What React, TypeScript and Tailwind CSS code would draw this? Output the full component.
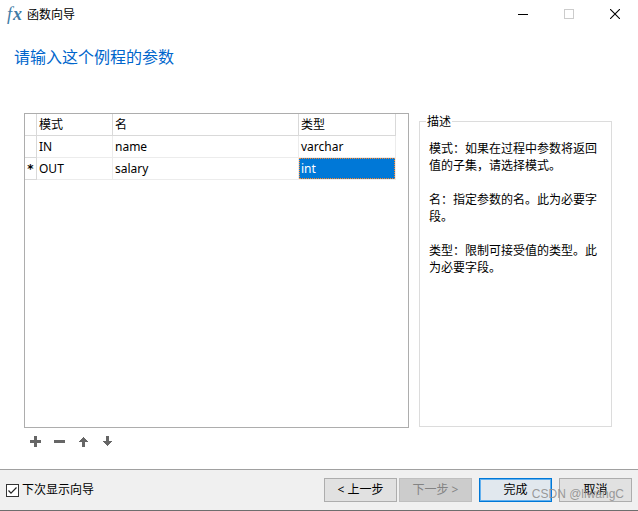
import type { ReactNode } from "react"

const params = [
  { mark: "", mode: "IN", name: "name", type: "varchar" },
  { mark: "*", mode: "OUT", name: "salary", type: "int" },
]

function ToolButton({ label, children }: { label: string; children: ReactNode }) {
  return (
    <button type="button" aria-label={label} className="flex h-6 w-6 items-center pl-[6px]">
      <svg width="11" height="11" viewBox="0 0 11 11" fill="#666" shapeRendering="crispEdges">
        {children}
      </svg>
    </button>
  )
}

export default function App() {
  return (
    <div className="flex min-h-screen flex-col border-b border-[#6e6e6e] bg-white font-['Noto_Sans','Noto_Sans_CJK_SC',sans-serif] text-xs text-black">
      {/* Title bar */}
      <header className="flex h-7 items-center pl-[6px]">
        <span aria-hidden="true" className="flex w-[17px] items-baseline gap-px pl-px font-['Liberation_Serif',serif] text-lg leading-none text-[#3f7ca6] italic">
          f<b>x</b>
        </span>
        <h1 className="ml-1 flex-1 pt-[2px]">函数向导</h1>
        <button type="button" aria-label="最小化" className="flex h-7 w-[46px] items-center justify-center">
          <svg width="10" height="10" viewBox="0 0 10 10" stroke="#000" shapeRendering="crispEdges"><path d="M0 5.5H10" /></svg>
        </button>
        <button type="button" aria-label="最大化" disabled className="flex h-7 w-[46px] items-center justify-center">
          <svg width="10" height="10" viewBox="0 0 10 10" fill="none" stroke="#ccc" shapeRendering="crispEdges"><path d="M.5 .5H9.5V9.5H.5Z" /></svg>
        </button>
        <button type="button" aria-label="关闭" className="flex h-7 w-[46px] items-center justify-center">
          <svg width="10" height="10" viewBox="0 0 10 10" stroke="#000" strokeWidth="1.1"><path d="M0 0L10 10M10 0L0 10" /></svg>
        </button>
      </header>

      <h2 className="mt-[17px] px-[14px] text-base leading-6 text-[#0066cc]">请输入这个例程的参数</h2>

      <main className="mt-11 flex flex-1 pr-[26px] pl-6">
        {/* Parameter grid */}
        <div className="flex flex-1 flex-col">
          <div className="flex-1 border border-[#adadad] pr-3">
            <table className="w-full table-fixed border-separate border-spacing-0">
              <colgroup>
                <col className="w-3" />
                <col className="w-[76px]" />
                <col />
                <col className="w-[97px]" />
              </colgroup>
              <thead>
                <tr className="h-[22px] text-left">
                  <th className="border-r border-b border-[#d9d9d9] p-0" />
                  <th className="border-r border-b border-[#d9d9d9] p-0 pl-[2px] font-normal">模式</th>
                  <th className="border-r border-b border-[#d9d9d9] p-0 pl-[2px] font-normal">名</th>
                  <th className="border-r border-b border-[#d9d9d9] p-0 pl-[2px] font-normal">类型</th>
                </tr>
              </thead>
              <tbody>
                {params.map((p) => (
                  <tr key={p.mode} className="h-[22px]">
                    <td className="border-r border-b border-[#d9d9d9] p-0 text-center font-['DejaVu_Sans',sans-serif] font-bold">{p.mark}</td>
                    <td className="border-r border-b border-[#ececec] p-0 pl-[2px]">{p.mode}</td>
                    <td className="border-r border-b border-[#ececec] p-0 pl-[2px]">{p.name}</td>
                    <td className="border-r border-b border-[#ececec] p-0">
                      {p.mark ? (
                        <div className="bg-[#0078d7] pl-[2px] leading-[21px] text-white outline-1 -outline-offset-1 outline-dotted outline-[#ff8728]">{p.type}</div>
                      ) : (
                        <div className="pl-[2px]">{p.type}</div>
                      )}
                    </td>
                  </tr>
                ))}
              </tbody>
            </table>
          </div>
          <div className="flex h-[41px] pt-px">
            <ToolButton label="添加">
              <path d="M4 0H7V4H11V7H7V11H4V7H0V4H4Z" />
            </ToolButton>
            <ToolButton label="删除">
              <path d="M0 4H11V7H0Z" />
            </ToolButton>
            <ToolButton label="上移">
              <path d="M5 1H6V2H7V3H8V4H9V5H10V6H7V11H4V6H1V5H2V4H3V3H4V2H5Z" />
            </ToolButton>
            <ToolButton label="下移">
              <path d="M4 0H7V5H10V6H9V7H8V8H7V9H6V10H5V9H4V8H3V7H2V6H1V5H4Z" />
            </ToolButton>
          </div>
        </div>

        {/* Description */}
        <fieldset className="mb-[42px] ml-[10px] w-[193px] border border-[#dcdcdc] px-[9px]">
          <legend className="-ml-[3px] px-px leading-[17px]">描述</legend>
          <div className="flex flex-col gap-[17px] pt-[10px] leading-[17px]">
            <p>模式：如果在过程中参数将返回值的子集，请选择模式。</p>
            <p>名：指定参数的名。此为必要字段。</p>
            <p>类型：限制可接受值的类型。此为必要字段。</p>
          </div>
        </fieldset>
      </main>

      {/* Footer */}
      <footer className="relative flex h-[41px] items-center border-t border-[#a0a0a0] bg-[#f0f0f0] px-[6px]">
        <label className="flex flex-1 items-center gap-[3px]">
          <span className="grid">
            <input type="checkbox" defaultChecked className="peer col-start-1 row-start-1 h-[13px] w-[13px] appearance-none border border-[#333] bg-white" />
            <svg width="13" height="13" viewBox="0 0 13 13" fill="none" stroke="#222" strokeWidth="1.2" className="pointer-events-none invisible col-start-1 row-start-1 peer-checked:visible"><path d="M2.5 6.5L5 9.2L10.5 3.5" /></svg>
          </span>
          下次显示向导
        </label>
        <button type="button" className="h-6 w-[73px] border border-[#adadad] bg-[#e1e1e1]">&lt; 上一步</button>
        <button type="button" disabled className="ml-[2px] h-6 w-[73px] border border-[#bfbfbf] bg-[#ccc] text-[#838383]">下一步 &gt;</button>
        <button type="button" className="ml-[7px] h-6 w-[73px] border border-[#0078d7] bg-[#e1e8ee] inset-ring inset-ring-[#62b0ee]">完成</button>
        <button type="button" className="ml-[7px] h-6 w-[73px] border border-[#adadad] bg-[#e1e1e1]">取消</button>
        <span className="pointer-events-none absolute right-[14px] bottom-[6px] font-['Liberation_Sans',sans-serif] text-xs leading-5 text-[#8f8f8f]/90">CSDN @liwangC</span>
      </footer>
    </div>
  )
}
